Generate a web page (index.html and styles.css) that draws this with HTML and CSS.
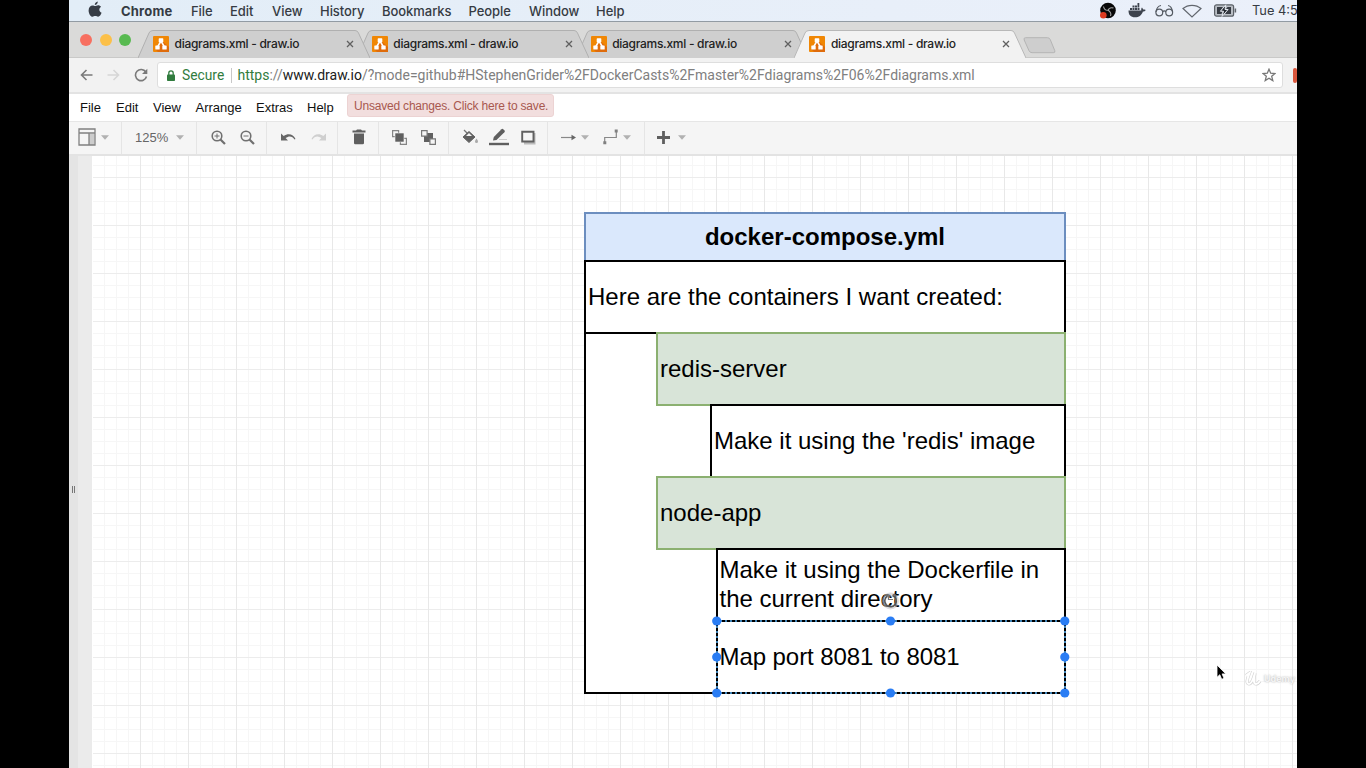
FILE: index.html
```html
<!DOCTYPE html>
<html lang="en">
<head>
<meta charset="utf-8">
<title>diagrams.xml - draw.io</title>
<link rel="stylesheet" href="styles.css">
</head>
<body>
<svg width="0" height="0" class="defs">
  <defs>
    <symbol id="drawio" viewBox="0 0 16 16"><rect width="16" height="16" rx="1" fill="#f08705"/><path d="M8 4 16 11v5H5L2 13z" fill="#df6c0c"/><path d="M8 5 4.500 11M8 5l3.500 6" stroke="#fff" stroke-width="1.500"/><rect x="5.700" y="2.300" width="4.600" height="4" rx=".6" fill="#fff"/><rect x="2.300" y="9.500" width="4.400" height="4" rx=".6" fill="#fff"/><rect x="9.300" y="9.500" width="4.400" height="4" rx=".6" fill="#fff"/></symbol>
    <symbol id="cross" viewBox="0 0 8 8"><path d="m1 1 6 6M7 1 1 7" stroke="#606060" stroke-width="1.300"/></symbol>
    <symbol id="caret" viewBox="0 0 8 5"><path d="M0 .3h8L4 4.700z" fill="#b1b1b1"/></symbol>
    <symbol id="tabshape" viewBox="0 0 232 28"><path d="M0 28 11 3Q12 .5 15 .5H217Q219.500.5 220.500 3L232 28"/></symbol>
  </defs>
</svg>
<div class="screen">
  <header class="menubar">
    <svg class="apple" width="14" height="17" viewBox="0 0 14 17"><path d="M9.800.4c.1 1.800-1.300 3.400-3 3.500C6.600 2.300 8.100.6 9.800.4zM7 5c.8 0 1.600-.8 3.100-.8 1.200 0 2.300.6 3 1.600-2.600 1.500-2.200 5 .5 6-.6 1.700-2 4-3.500 4-1.100 0-1.500-.7-2.800-.7-1.300 0-1.800.7-2.800.7C2.800 15.800.6 12.600.6 9.400c0-3.200 2-5 4-5C5.700 4.400 6.500 5 7 5z" fill="#373d46"/></svg>
    <span class="mi app">Chrome</span><span class="mi w39">File</span><span class="mi w42">Edit</span><span class="mi w48">View</span><span class="mi w62">History</span><span class="mi w86">Bookmarks</span><span class="mi w61">People</span><span class="mi w67">Window</span><span class="mi">Help</span>
    <div class="status">
      <svg width="17" height="17" viewBox="0 0 17 17"><circle cx="9" cy="8.500" r="7.800" fill="#080808"/><path d="M4.500 4.500C5 7 6.500 8.500 9 8.300M14.500 6C12.500 5.200 10 6 9 8.300M11.500 14C12.500 12 11.500 9.500 9 8.300" fill="none" stroke="#aaa" stroke-width="1.100"/><circle cx="4.300" cy="13.200" r="3.300" fill="#dd3a20"/></svg>
      <svg class="whale" width="18" height="15" viewBox="0 0 18 15"><path d="M.5 7.500h12.800c-.2-1.300 0-2.300.7-3l1.300 2c1 0 1.800.1 2.400.5-.6 1.100-1.500 1.500-2.800 1.500-1.300 4-4 5.800-7.800 5.800C2.600 14.300.5 12 .5 7.500zM2 5h2v2H2zM4.500 5h2v2h-2zM7 5h2v2H7zM9.500 5h2v2h-2zM4.500 2.500h2v2h-2zM7 2.500h2v2H7zM9.500 0h1.800v4.500H9.500z" fill="#3d434d"/></svg>
      <svg class="specs" width="19" height="13" viewBox="0 0 19 13"><g fill="none" stroke="#555b63" stroke-width="1.200"><circle cx="4.300" cy="8.500" r="3.400"/><circle cx="14.200" cy="8.500" r="3.400"/><path d="M7.600 8c1-1.500 2.300-1.500 3.300 0M1 8C1.500 4 3 2 6 1.500M17.600 8C17 4 16 2 13 1.500"/></g></svg>
      <svg class="wifi" width="20" height="14" viewBox="0 0 20 14"><path d="M1 4.500c5-4.300 13-4.300 18 0L10 13z" fill="none" stroke="#62676e" stroke-width="1.200"/></svg>
      <svg class="batt" width="23" height="13" viewBox="0 0 23 13"><rect x=".6" y=".8" width="19" height="11.400" rx="2" fill="#b9bec5" stroke="#5b6067" stroke-width="1.200"/><path d="M3 3h6L6 7.500h2.500L7.500 10H3zM11 10l3.500-5H12l1.500-2H17v7z" fill="#363b43"/><path d="M11.800.8 6.500 7.200h3L8 12.500 14 5.500h-3z" fill="#20252c" stroke="#dfe4eb" stroke-width="1"/><path d="M21.400 4.500v4" stroke="#62676e" stroke-width="1.500"/></svg>
      <span class="clock">Tue 4:5</span>
    </div>
  </header>

  <div class="tabstrip">
    <div class="lights"><i class="l-red"></i><i class="l-amber"></i><i class="l-green"></i></div>
    <div class="tab t1"><svg class="shape"><use href="#tabshape"/></svg><svg class="fav"><use href="#drawio"/></svg><span class="title">diagrams.xml - draw.io</span><svg class="x"><use href="#cross"/></svg></div>
    <div class="tab t2"><svg class="shape"><use href="#tabshape"/></svg><svg class="fav"><use href="#drawio"/></svg><span class="title">diagrams.xml - draw.io</span><svg class="x"><use href="#cross"/></svg></div>
    <div class="tab t3"><svg class="shape"><use href="#tabshape"/></svg><svg class="fav"><use href="#drawio"/></svg><span class="title">diagrams.xml - draw.io</span><svg class="x"><use href="#cross"/></svg></div>
    <div class="tab active"><svg class="shape"><use href="#tabshape"/></svg><svg class="fav"><use href="#drawio"/></svg><span class="title">diagrams.xml - draw.io</span><svg class="x"><use href="#cross"/></svg></div>
    <svg class="newtab" width="33" height="17" viewBox="0 0 33 17"><path d="M2.500.7H24.500q2 0 2.800 2l4.500 11q.7 2-1.500 2H9q-2 0-3-2L1.200 3Q.4.700 2.500.7z" fill="#cecece" stroke="#b4b4b4"/></svg>
  </div>

  <div class="addressbar">
    <svg class="back" width="13" height="12" viewBox="0 0 13 12"><path d="M12.500 6H1.500M6.500 1l-5 5 5 5" fill="none" stroke="#7a7a7a" stroke-width="1.600"/></svg>
    <svg class="fwd" width="13" height="12" viewBox="0 0 13 12"><path d="M.5 6h11M6.500 1l5 5-5 5" fill="none" stroke="#d6d6d6" stroke-width="1.600"/></svg>
    <svg class="reload" width="14" height="14" viewBox="0 0 14 14"><path d="M11.800 4A5.600 5.600 0 1 0 12.500 8.500" fill="none" stroke="#7a7a7a" stroke-width="1.600"/><path d="M13.300.8v5.200H8z" fill="#7a7a7a"/></svg>
    <div class="field">
      <svg width="8" height="11" viewBox="0 0 8 11"><rect y="4.500" width="8" height="6.500" rx=".8" fill="#317c3e"/><path d="M1.800 5V3a2.200 2.200 0 0 1 4.400 0v2" fill="none" stroke="#317c3e" stroke-width="1.300"/></svg>
      <span class="secure">Secure</span><i class="rule"></i><span class="url"><b class="proto">https</b>://<b class="host">www.draw.io</b>/?mode=github#HStephenGrider%2FDockerCasts%2Fmaster%2Fdiagrams%2F06%2Fdiagrams.xml</span>
      <svg class="star" width="14" height="14" viewBox="0 0 14 14"><path d="m7 1.200 1.700 4 4.300.3-3.300 2.800 1.100 4.300L7 10.300l-3.800 2.300 1.100-4.300L1 5.500l4.300-.3z" fill="none" stroke="#777" stroke-width="1.300"/></svg>
    </div>
    <i class="ext"></i>
  </div>

  <nav class="appmenu">
    <span class="w36">File</span><span class="w37">Edit</span><span class="w43">View</span><span class="w60">Arrange</span><span class="w51">Extras</span><span class="w40">Help</span>
    <div class="banner">Unsaved changes. Click here to save.</div>
  </nav>

  <div class="toolbar">
    <div class="grp g1"><svg width="18" height="18" viewBox="0 0 18 18"><path d="M11 6h5.500v11H11z" fill="#ccc"/><path d="M1 1h16v16H1zM1 5h16M11 5v12" fill="none" stroke="#808080" stroke-width="1.300"/></svg><svg class="caret"><use href="#caret"/></svg></div>
    <div class="grp g2"><span>125%</span><svg class="caret"><use href="#caret"/></svg></div>
    <div class="grp g3">
      <svg width="15" height="15" viewBox="0 0 15 15"><circle cx="6" cy="6" r="4.800" fill="none" stroke="#707070" stroke-width="1.600"/><path d="m9.500 9.500 4.500 4.500" stroke="#707070" stroke-width="2.200"/><path d="M3.500 6h5M6 3.500v5" stroke="#707070"/></svg>
      <svg width="15" height="15" viewBox="0 0 15 15"><circle cx="6" cy="6" r="4.800" fill="none" stroke="#707070" stroke-width="1.600"/><path d="m9.500 9.500 4.500 4.500" stroke="#707070" stroke-width="2.200"/><path d="M3.500 6h5" stroke="#707070"/></svg>
    </div>
    <div class="grp g4">
      <svg width="15" height="8" viewBox="0 0 15 8"><path d="M0 .5v7h7L4.600 5C8 2.500 11.500 3 13.500 6.500l1-.4C12.500 1 7 0 2.700 3z" fill="#666"/></svg>
      <svg width="15" height="8" viewBox="0 0 15 8"><path d="M15 .5v7H8L10.400 5C7 2.500 3.500 3 1.500 6.500l-1-.4C2.500 1 8 0 12.300 3z" fill="#cfcfcf"/></svg>
    </div>
    <div class="grp g5"><svg width="14" height="16" viewBox="0 0 14 16"><path d="M.5 1.500H4L5 .5h4l1 1h3.500v2H.5zM2 4.500h10v9.500q0 1.300-1.300 1.300H3.300Q2 15.300 2 14z" fill="#5f5f5f"/></svg></div>
    <div class="grp g6">
      <svg width="15" height="15" viewBox="0 0 15 15"><path d="M.6.6h6v6h-6zM8.400 8.400h6v6h-6z" fill="#f5f5f5" stroke="#858585" stroke-width="1.200"/><path d="M3 3h9v9H3z" fill="#606060" stroke="#f5f5f5" stroke-width=".6"/></svg>
      <svg width="15" height="15" viewBox="0 0 15 15"><path d="M3 3h9v9H3z" fill="#606060"/><path d="M.6.6h5.500v5.500H.6zM8.900 8.900h5.500v5.500H8.900z" fill="#f5f5f5" stroke="#777" stroke-width="1.200"/></svg>
    </div>
    <div class="grp g7">
      <svg width="17" height="16" viewBox="0 0 17 16"><path d="M2 1l4 4" stroke="#777" stroke-width="1.200"/><path d="M7 2.500 1 8 7 13.500 13 8z" fill="#606060" stroke="#666"/><path d="M7 4 4 7h6z" fill="#f5f5f5"/><path d="M14.500 9.500c1 1.600 1.500 2.200 1.500 3a1.500 1.500 0 0 1-3 0c0-.8.500-1.400 1.500-3z" fill="#aaa"/></svg>
      <svg width="20" height="18" viewBox="0 0 20 18"><path d="M4 12.500 4.800 9 12.500 1.200q1-.8 2 .2l1 1q.8 1-.1 1.900L7.500 12z" fill="#5f5f5f"/><path d="M10 11.500h8" stroke="#ccc"/><path d="M0 16h20" stroke="#5f5f5f" stroke-width="2.400"/></svg>
      <svg width="15" height="15" viewBox="0 0 15 15"><path d="M3 3h11.500v11.500H3z" fill="#bbb"/><path d="M1.200 1.700h11.300v9.800H1.200z" fill="#f5f5f5" stroke="#606060" stroke-width="1.900"/></svg>
    </div>
    <div class="grp g8">
      <svg width="15" height="7" viewBox="0 0 15 7"><path d="M0 3.500h12" stroke="#888" stroke-width="1.200"/><path d="M10.500.8 15 3.500l-4.500 2.700z" fill="#666"/></svg><svg class="caret"><use href="#caret"/></svg>
      <svg class="elbow" width="15" height="16" viewBox="0 0 15 16"><path d="M1.700 14V8.500h11.600V2" fill="none" stroke="#888" stroke-width="1.200"/><path d="M.3 12.300h3v3h-3zM11.700.5h3v3h-3z" fill="#808080"/></svg><svg class="caret"><use href="#caret"/></svg>
    </div>
    <div class="grp g9"><svg width="13" height="13" viewBox="0 0 13 13"><path d="M6.500 0v13M0 6.500h13" stroke="#5f5f5f" stroke-width="2.800"/></svg><svg class="caret"><use href="#caret"/></svg></div>
  </div>

  <main class="work">
    <div class="splitter"><i></i><i></i></div>
    <div class="gutter"></div>
    <div class="canvas">
      <div class="node outer"></div>
      <div class="node intro">Here are the containers I want created:</div>
      <div class="node head">docker-compose.yml</div>
      <div class="node redis-image">Make it using the 'redis' image</div>
      <div class="node green redis">redis-server</div>
      <div class="node docker">Make it using the Dockerfile in<br>the current directory</div>
      <div class="node green app-node">node-app</div>
      <div class="node topline tl0"></div>
      <div class="node topline tl1"></div>
      <div class="node topline tl2"></div>
      <div class="node port">Map port 8081 to 8081</div>
      <svg class="selection" width="366" height="112" viewBox="0 0 366 112">
        <path d="M9 31h348v72H9z" fill="none" stroke="#3f82b5" stroke-width="2"/><path d="M9 31h348v72H9z" fill="none" stroke="#000" stroke-width="2" stroke-dasharray="3 2"/>
        <g fill="#2a7df4"><circle cx="8.700" cy="31" r="4.600"/><circle cx="182.500" cy="31" r="4.600"/><circle cx="356.800" cy="31" r="4.600"/><circle cx="8.700" cy="67" r="4.600"/><circle cx="356.800" cy="67" r="4.600"/><circle cx="8.700" cy="103" r="4.600"/><circle cx="182.500" cy="103" r="4.600"/><circle cx="356.800" cy="103" r="4.600"/></g>
        <g fill="none"><circle cx="182.500" cy="11" r="6.500" stroke="#c4c4c4" stroke-width="4" opacity=".55"/><path d="M184.500 5.500a5.800 5.800 0 1 1-5 .5" stroke="#555" stroke-width="1.500"/><path d="M180.500 5v4.500h4.500" stroke="#777" stroke-width="1.200"/></g>
      </svg>
      <svg class="cursor" width="11" height="17" viewBox="0 0 11 17"><path d="M1 1v12.300l2.800-2.600 1.900 4.600 2.300-1-1.900-4.400h3.700z" fill="#000" stroke="#fff" stroke-width=".8"/></svg>
      <div class="watermark"><svg width="18" height="15" viewBox="0 0 18 15"><path d="M2 4.500 5.500 2C3 8 2 13 5 13S9.500 7 11 2c-1.500 6-1.600 11 1 11 1.800 0 3-1.500 4-3" fill="none" stroke="#d2d2d2" stroke-width="3.200"/><path d="M2 4.500 5.500 2C3 8 2 13 5 13S9.500 7 11 2c-1.500 6-1.600 11 1 11 1.800 0 3-1.500 4-3" fill="none" stroke="#fff" stroke-width="2"/></svg><span>Udemy</span></div>
    </div>
  </main>
</div>
</body>
</html>
```
FILE: styles.css
```css
* { box-sizing: border-box; }
body { margin: 0; background: #000; overflow: hidden; }
.defs { position: absolute; }
svg { flex: none; display: block; }
.screen { width: 1228px; height: 768px; margin-left: 69px; overflow: hidden; display: flex; flex-direction: column; background: #fff; font-family: Inter, sans-serif; }

.menubar { height: 22px; flex: none; display: flex; align-items: center; padding-left: 19px; background: linear-gradient(90deg, #e2edf7, #ebf0fa); border-bottom: 1px solid #929ba3; font-size: 13px; color: #363b43; white-space: nowrap; }
.apple { margin-right: 19px; margin-top: -2px; }
.mi { letter-spacing: -.05px; font-weight: 450; }
.app { width: 70px; font-weight: 700; letter-spacing: .2px; }
.w39 { width: 39px; } .w42 { width: 42px; } .w48 { width: 48px; } .w62 { width: 62px; } .w86 { width: 86.5px; } .w61 { width: 60.5px; } .w67 { width: 67px; }
.status { margin-left: auto; width: 198px; flex: none; display: flex; align-items: center; }
.whale { margin-left: 12px; margin-top: -1px; }
.specs { margin-left: 9px; }
.wifi { margin-left: 8px; }
.batt { margin-left: 12px; }
.clock { margin-left: 15px; font-size: 12.800px; }

.tabstrip { height: 36px; flex: none; display: flex; align-items: flex-end; background: #dadad9; border-bottom: 1px solid #c9c9c8; position: relative; }
.lights { display: flex; gap: 7.500px; padding: 0 7px 11px 11px; width: 69px; }
.lights i { width: 12px; height: 12px; border-radius: 50%; flex: none; }
.l-red { background: #f76f60; } .l-amber { background: #fcc048; } .l-green { background: #58ba51; }
.tab { position: relative; width: 232px; height: 28px; flex: none; margin-right: -13.200px; display: flex; align-items: center; padding: 0 0 1px 15px; margin-bottom: -1px; font-size: 12px; color: #222; }
.shape { position: absolute; inset: 0; width: 232px; height: 28px; fill: #cfcfcf; stroke: #b0b0b0; stroke-width: 1; }
.t1 { z-index: 3; } .t2 { z-index: 2; } .t3 { z-index: 1; }
.active { z-index: 4; }
.active .shape { fill: #f2f2f2; stroke: #b8b8b8; }
.fav { position: relative; width: 16px; height: 16px; }
.title { position: relative; margin-left: 5.500px; width: 171.500px; white-space: nowrap; letter-spacing: -.28px; font-weight: 500; }
.x { position: relative; width: 8px; height: 8px; }
.newtab { margin: 0 0 3px 10px; }

.addressbar { height: 36px; flex: none; display: flex; align-items: center; background: #f2f2f2; border-bottom: 2px solid #e3e3e3; padding-left: 11px; }
.fwd { margin-left: 14px; }
.reload { margin-left: 14px; }
.field { width: 1128px; height: 26px; margin-left: 9px; display: flex; align-items: center; background: #fff; border: 1px solid #dedede; border-radius: 3px; padding: 0 6px 0 9px; font: 14px Roboto, sans-serif; color: #808080; white-space: nowrap; }
.secure { color: #317c3e; margin-left: 7px; width: 49px; font-size: 13.800px; }
.rule { width: 1px; height: 15px; background: #c8c8c8; margin-right: 5.500px; }
.url { letter-spacing: -.005px; }
.url b { font-weight: 400; }
.proto { color: #317c3e; }
.host { color: #202020; }
.star { margin-left: auto; }
.ext { width: 4px; height: 15px; margin-left: 10px; background: #d9573d; border-radius: 2px; }

.appmenu { height: 28px; flex: none; display: flex; align-items: center; padding: 0 0 1px 11px; font: 13px "Liberation Sans", sans-serif; color: #111; border-bottom: 1px solid #e6e6e6; white-space: nowrap; }
.w36 { width: 36px; } .w37 { width: 37px; } .w43 { width: 42.500px; } .w60 { width: 60.500px; } .w51 { width: 51px; } .w40 { width: 40px; }
.banner { width: 207px; height: 23px; align-self: flex-start; background: #f2dede; border: 1px solid #ecd3d3; border-radius: 3px; color: #a8584f; font-size: 12px; letter-spacing: -.2px; line-height: 22px; padding-left: 6px; }

.toolbar { height: 34px; flex: none; display: flex; background: #f5f5f5; border-bottom: 2px solid #e3e3e3; }
.grp { display: flex; align-items: center; border-right: 1px solid #e5e5e5; flex: none; font: 13px "Liberation Sans", sans-serif; color: #666; padding-bottom: 2px; }
.caret { width: 8px; height: 5px; }
.g1 { width: 53px; padding-left: 9px; gap: 5px; }
.g2 { width: 75px; padding-left: 13px; gap: 8px; }
.g3 { width: 70px; padding-left: 14px; gap: 14px; }
.g4 { width: 71px; padding-left: 14px; gap: 15px; }
.g5 { width: 41px; padding-left: 14px; }
.g6 { width: 70px; padding-left: 13px; gap: 14px; }
.g7 { width: 99px; padding-left: 13px; gap: 10px; }
.g7 svg:last-child { margin-left: 2px; }
.g8 { width: 97px; padding-left: 13px; gap: 5px; }
.elbow { margin-left: 9px; }
.g9 { padding-left: 12px; gap: 8px; border: 0; }

.work { flex: 1; display: flex; min-height: 0; }
.splitter { width: 9px; background: #e4e4e4; display: flex; gap: 1px; align-items: center; padding: 54px 0 0 3px; }
.splitter i { width: 1px; height: 7px; background: #777; }
.gutter { width: 14px; background: #ebebeb; }
.canvas { flex: 1; position: relative; overflow: hidden; background-color: #fff;
  background-image: linear-gradient(#fff, #fff), linear-gradient(90deg, #e8e8e8 1px, transparent 1px), linear-gradient(#ececec 1px, transparent 1px), linear-gradient(90deg, #f6f6f6 1px, transparent 1px), linear-gradient(#f6f6f6 1px, transparent 1px);
  background-repeat: no-repeat, repeat, repeat, repeat, repeat;
  background-size: 1px 100%, 48px 48px, 48px 48px, 12px 12px, 12px 12px; background-position: 0 0, 0 0, 0 21px, 0 0, 0 9px; }

/* Diagram nodes, placed in canvas coordinates */
.node { position: absolute; border: 2px solid #000; background: #fff; display: flex; align-items: center; padding: 0 0 2px 2px; font: 24px/29px "Liberation Sans", sans-serif; color: #000; white-space: nowrap; }
.outer { left: 492px; top: 176px; width: 482px; height: 362px; }
.head { left: 492px; top: 56px; width: 482px; height: 50px; background: #dae8fc; border-color: #6c8ebf; border-bottom-color: #000; justify-content: center; font-weight: 700; padding: 0 0 2px; }
.intro { left: 492px; top: 104px; width: 482px; height: 74px; }
.green { background: #d8e4d8; border-color: #8bb070; left: 564px; width: 410px; height: 74px; }
.redis { top: 176px; }
.redis-image { left: 618px; top: 248px; width: 356px; height: 74px; }
.app-node { top: 320px; }
.docker { left: 624px; top: 392px; width: 350px; height: 74px; padding-left: 1.500px; letter-spacing: -.02px; }
.topline { height: 2px; border: 0; background: #000; padding: 0; }
.tl0 { left: 492px; top: 104px; width: 482px; }
.tl1 { left: 618px; top: 248px; width: 356px; }
.tl2 { left: 624px; top: 392px; width: 350px; }
.port { left: 624px; top: 464px; width: 350px; height: 74px; padding-left: 1.500px; letter-spacing: -.07px; }
.selection { position: absolute; left: 616px; top: 434px; }
.cursor { position: absolute; left: 1124px; top: 508px; }
.watermark { position: absolute; left: 1152px; top: 515px; display: flex; align-items: center; gap: 2px; font: 700 9px/14px Inter, sans-serif; color: #f4f4f4; text-shadow: 0 0 2px #aaa; }
```
